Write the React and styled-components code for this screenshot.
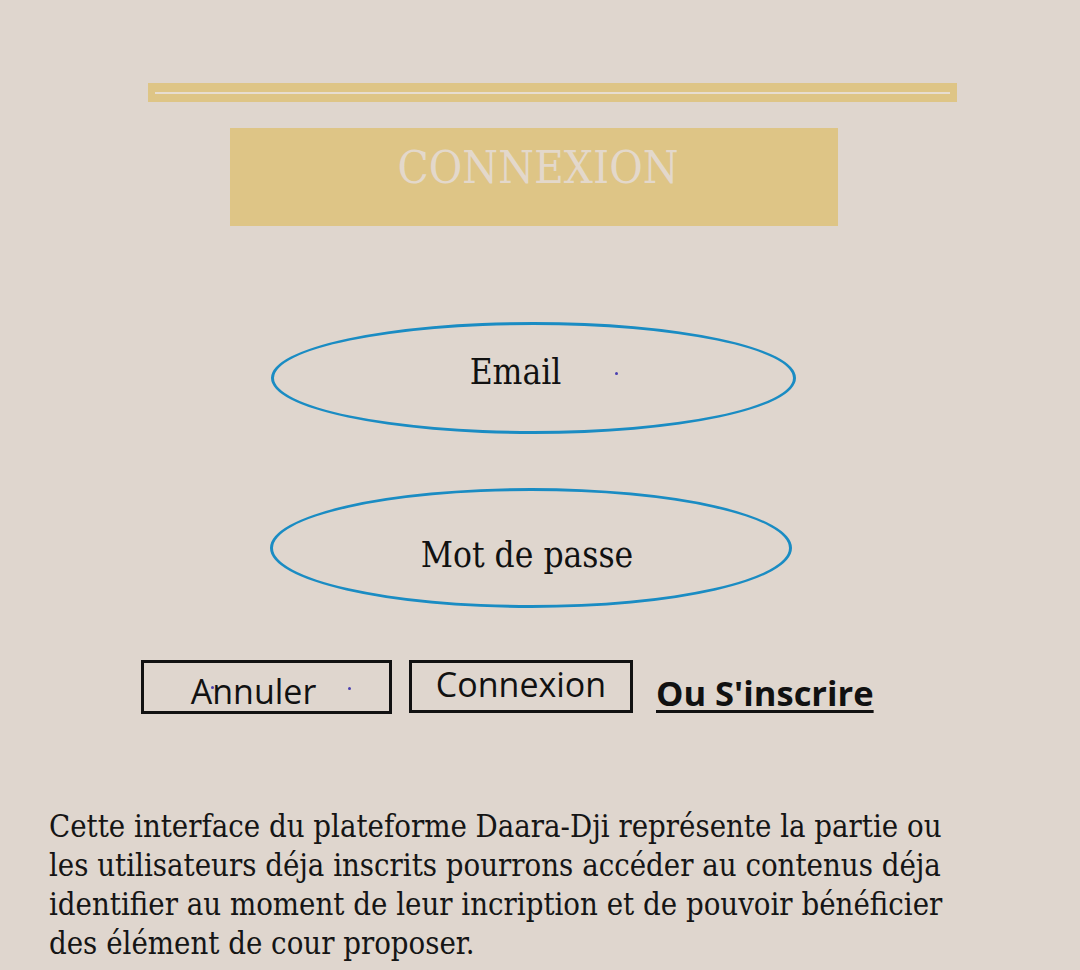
import React from "react";
import styled, { createGlobalStyle } from "styled-components";

const Global = createGlobalStyle`
  html, body { margin: 0; padding: 0; background: #dfd6ce; }
  body { font-family: "DejaVu Serif", serif; color: #111; }
`;

const Page = styled.div`
  width: 1080px;
  min-height: 970px;
  display: flex;
  flex-direction: column;
  align-items: flex-start;
  overflow: hidden;
`;

const TopBar = styled.div`
  margin: 83px 0 0 148px;
  width: 809px;
  height: 19px;
  background: #dec586;
  display: flex;
  align-items: center;
  padding: 0 7px;
  box-sizing: border-box;
`;

const TopLine = styled.div`
  flex: 1;
  height: 2px;
  background: #e7ddd0;
`;

const Header = styled.div`
  margin: 26px 0 0 230px;
  width: 608px;
  height: 98px;
  background: #dec586;
  display: flex;
  justify-content: center;
  padding: 14px 0 0 8px;
  box-sizing: border-box;
`;

const HeaderTitle = styled.h1`
  margin: 0;
  font-family: "DejaVu Serif", serif;
  font-stretch: condensed;
  font-weight: 400;
  font-size: 45.5px;
  line-height: 52px;
  color: #e3d8cb;
`;

const Oval = styled.div`
  position: relative;
  margin: ${(p) => p.$top}px 0 0 ${(p) => p.$left}px;
  width: ${(p) => p.$w}px;
  height: ${(p) => p.$h}px;
  box-sizing: border-box;
  border: 3.5px solid #1a8cc3;
  border-radius: 50%;
  display: flex;
  align-items: center;
  justify-content: center;
  padding: ${(p) => p.$pad};
`;

const OvalLabel = styled.span`
  font-family: "DejaVu Serif", serif;
  font-stretch: condensed;
  font-size: 35px;
  line-height: 40px;
  color: #111;
`;

const Dot = styled.span`
  position: absolute;
  left: ${(p) => p.$x}px;
  top: ${(p) => p.$y}px;
  width: 3px;
  height: 3px;
  border-radius: 50%;
  background: #4a3fb0;
`;

const ButtonRow = styled.div`
  margin: 52px 0 0 141px;
  display: flex;
  align-items: flex-start;
`;

const BoxButton = styled.button`
  position: relative;
  width: ${(p) => p.$w}px;
  height: ${(p) => p.$h}px;
  margin-right: ${(p) => p.$mr}px;
  box-sizing: border-box;
  border: 3px solid #111;
  background: transparent;
  font-family: "Open Sans", "Noto Sans", sans-serif;
  font-size: 34px;
  line-height: 1;
  color: #111;
  padding: ${(p) => p.$pad};
  display: flex;
  align-items: center;
  justify-content: center;
`;

const SignupLink = styled.a`
  margin-top: 13px;
  font-family: "Open Sans", "Noto Sans", sans-serif;
  font-weight: 700;
  font-size: 34.5px;
  line-height: 40px;
  color: #111;
  text-decoration: underline;
  text-decoration-thickness: 3px;
  text-underline-offset: 4px;
`;

const Description = styled.p`
  margin: 93px 0 0 49px;
  font-family: "DejaVu Serif", serif;
  font-stretch: condensed;
  font-size: 30.8px;
  line-height: 39px;
  color: #151515;
  white-space: nowrap;
`;

export default function App() {
  return (
    <>
      <Global />
      <Page>
        <TopBar>
          <TopLine />
        </TopBar>
        <Header>
          <HeaderTitle>CONNEXION</HeaderTitle>
        </Header>
        <Oval $top={96} $left={271} $w={525} $h={112} $pad="0 36px 12px 0">
          <OvalLabel>Email</OvalLabel>
          <Dot $x={341} $y={47} />
        </Oval>
        <Oval $top={54} $left={270} $w={522} $h={120} $pad="14px 8px 0 0">
          <OvalLabel>Mot de passe</OvalLabel>
        </Oval>
        <ButtonRow>
          <BoxButton $w={251} $h={54} $mr={17} $pad="8px 26px 0 0">
            Annuler
            <Dot $x={67} $y={23} />
            <Dot $x={204} $y={24} />
          </BoxButton>
          <BoxButton $w={224} $h={53} $mr={23} $pad="0 0 6px 0">
            Connexion
          </BoxButton>
          <SignupLink href="#">Ou S'inscrire</SignupLink>
        </ButtonRow>
        <Description>
          Cette interface du plateforme Daara-Dji représente la partie ou
          <br />
          les utilisateurs déja inscrits pourrons accéder au contenus déja
          <br />
          identifier au moment de leur incription et de pouvoir bénéficier
          <br />
          des élément de cour proposer.
        </Description>
      </Page>
    </>
  );
}
